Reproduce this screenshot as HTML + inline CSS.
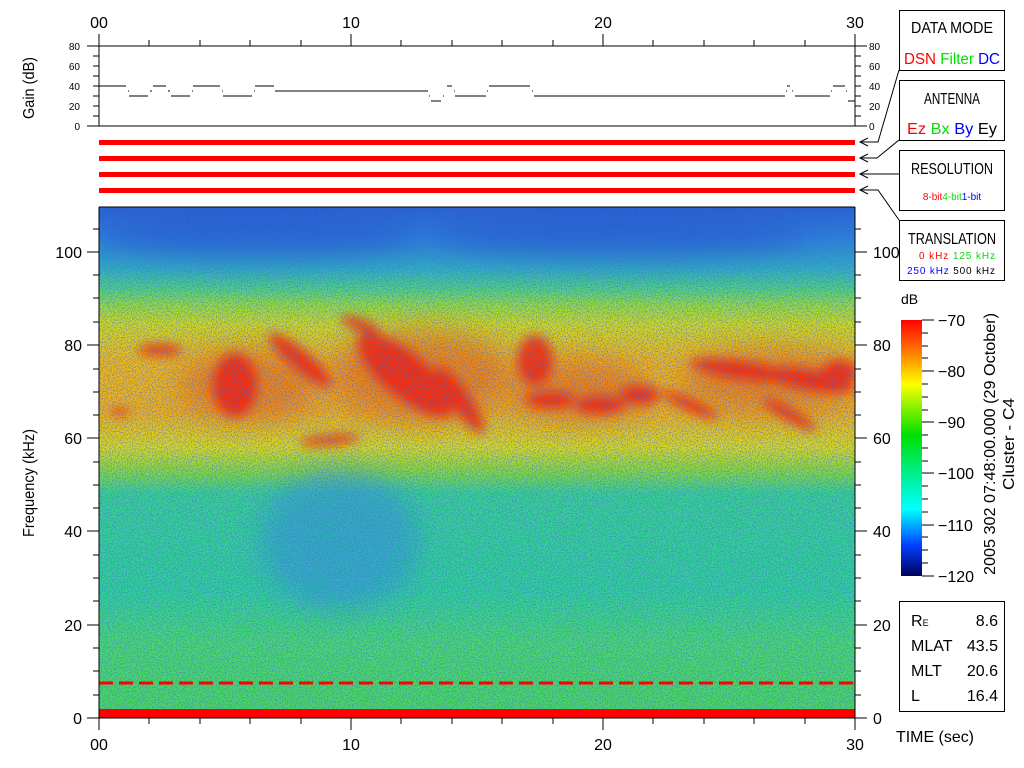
<!DOCTYPE html>
<html><head><meta charset="utf-8"><style>
html,body{margin:0;padding:0;background:#fff;}
svg{display:block;}
text{font-family:"Liberation Sans","DejaVu Sans",sans-serif;}
</style></head><body>
<svg width="1024" height="768" viewBox="0 0 1024 768" xmlns="http://www.w3.org/2000/svg">
<defs>
<linearGradient id="bg" x1="0" y1="207" x2="0" y2="718" gradientUnits="userSpaceOnUse">
<stop offset="0" stop-color="#2860d0"/>
<stop offset="0.06" stop-color="#2a80d8"/>
<stop offset="0.12" stop-color="#30b0c0"/>
<stop offset="0.16" stop-color="#50d080"/>
<stop offset="0.19" stop-color="#90dc40"/>
<stop offset="0.23" stop-color="#d0d820"/>
<stop offset="0.30" stop-color="#f0b818"/>
<stop offset="0.40" stop-color="#f0b018"/>
<stop offset="0.47" stop-color="#d8d820"/>
<stop offset="0.52" stop-color="#80d840"/>
<stop offset="0.56" stop-color="#38d090"/>
<stop offset="0.75" stop-color="#30d098"/>
<stop offset="0.85" stop-color="#48d870"/>
<stop offset="0.95" stop-color="#48d860"/>
<stop offset="1" stop-color="#48d860"/>
</linearGradient>
<linearGradient id="cb" x1="0" y1="0" x2="0" y2="1">
<stop offset="0" stop-color="#ff0000"/>
<stop offset="0.13" stop-color="#ff8000"/>
<stop offset="0.25" stop-color="#ffff00"/>
<stop offset="0.45" stop-color="#00e000"/>
<stop offset="0.62" stop-color="#00f0a0"/>
<stop offset="0.74" stop-color="#00ffff"/>
<stop offset="0.88" stop-color="#0040ff"/>
<stop offset="1" stop-color="#000060"/>
</linearGradient>
<filter id="bl" x="-50%" y="-50%" width="200%" height="200%"><feGaussianBlur stdDeviation="14"/></filter>
<filter id="bl2" x="-50%" y="-50%" width="200%" height="200%"><feGaussianBlur stdDeviation="5"/></filter>
<filter id="nz" x="0" y="0" width="100%" height="100%"><feTurbulence type="fractalNoise" baseFrequency="0.8" numOctaves="1" seed="3" result="t"/><feColorMatrix in="t" type="matrix" values="0 0 0 0 0.05  0 0 0 0 0.15  0 0 0 0 0.7  0 0 0 -6 3.2"/></filter>
<clipPath id="cp"><rect x="99" y="207" width="756" height="511"/></clipPath>
</defs>

<g clip-path="url(#cp)">
<rect x="99" y="207" width="756" height="511" fill="url(#bg)"/>
<g filter="url(#bl)" opacity="0.55">
<ellipse cx="340" cy="540" rx="80" ry="70" fill="#3090e0"/>
<ellipse cx="260" cy="235" rx="160" ry="22" fill="#2050c8"/>
<ellipse cx="620" cy="235" rx="190" ry="22" fill="#2050c8"/>
</g>
<g filter="url(#bl)" fill="#f06010" opacity="0.6">
<ellipse cx="250" cy="385" rx="70" ry="35"/>
<ellipse cx="420" cy="375" rx="90" ry="45"/>
<ellipse cx="580" cy="390" rx="70" ry="30"/>
<ellipse cx="770" cy="380" rx="90" ry="30"/>
</g>
<g filter="url(#bl2)" fill="#ff1000" opacity="0.75">
<ellipse cx="235" cy="385" rx="22" ry="32"/>
<ellipse cx="160" cy="350" rx="22" ry="6"/>
<ellipse cx="300" cy="360" rx="40" ry="10" transform="rotate(40 300 360)"/>
<ellipse cx="405" cy="375" rx="60" ry="22" transform="rotate(40 405 375)"/>
<ellipse cx="460" cy="400" rx="40" ry="10" transform="rotate(55 460 400)"/>
<ellipse cx="535" cy="360" rx="18" ry="25"/>
<ellipse cx="550" cy="400" rx="25" ry="8"/>
<ellipse cx="600" cy="405" rx="25" ry="9"/>
<ellipse cx="640" cy="395" rx="20" ry="10"/>
<ellipse cx="690" cy="405" rx="30" ry="6" transform="rotate(25 690 405)"/>
<ellipse cx="740" cy="370" rx="50" ry="9" transform="rotate(8 740 370)"/>
<ellipse cx="810" cy="380" rx="45" ry="10" transform="rotate(10 810 380)"/>
<ellipse cx="840" cy="372" rx="18" ry="12"/>
<ellipse cx="790" cy="415" rx="30" ry="6" transform="rotate(30 790 415)"/>
<ellipse cx="360" cy="325" rx="20" ry="6" transform="rotate(20 360 325)"/>
<ellipse cx="120" cy="412" rx="10" ry="3"/>
<ellipse cx="330" cy="440" rx="30" ry="5" transform="rotate(-5 330 440)"/>
</g>
<rect x="99" y="207" width="756" height="511" filter="url(#nz)" opacity="0.5"/>
<rect x="99" y="709" width="756" height="9" fill="#ff0000"/>
<line x1="99" y1="683" x2="855" y2="683" stroke="#ff0000" stroke-width="3" stroke-dasharray="14 6"/>
</g>

<g stroke="#000" stroke-width="1" fill="none">
<line x1="99" y1="207" x2="99" y2="718"/>
<line x1="855" y1="207" x2="855" y2="718"/>
<line x1="99" y1="718" x2="855" y2="718"/>
<line x1="99" y1="207" x2="855" y2="207"/>
<path d="M87 718H99M87 625H99M87 531H99M87 438H99M87 345H99M87 252H99M93 671H99M93 578H99M93 485H99M93 392H99M93 298H99M93 695H99M93 648H99M93 601H99M93 555H99M93 508H99M93 462H99M93 415H99M93 369H99M93 322H99M93 275H99M93 229H99"/>
<path d="M855 718H867M855 625H867M855 531H867M855 438H867M855 345H867M855 252H867M855 671H861M855 578H861M855 485H861M855 392H861M855 298H861M855 695H861M855 648H861M855 601H861M855 555H861M855 508H861M855 462H861M855 415H861M855 369H861M855 322H861M855 275H861M855 229H861"/>
<path d="M99 718V730M351 718V730M603 718V730M855 718V730M149 718V724M200 718V724M250 718V724M301 718V724M401 718V724M452 718V724M502 718V724M553 718V724M653 718V724M704 718V724M754 718V724M805 718V724"/>
<path d="M99 34V46M351 34V46M603 34V46M855 34V46M149 40V46M200 40V46M250 40V46M301 40V46M401 40V46M452 40V46M502 40V46M553 40V46M653 40V46M704 40V46M754 40V46M805 40V46"/>
<line x1="87" y1="46" x2="867" y2="46"/>
<line x1="87" y1="126" x2="867" y2="126"/>
<line x1="99" y1="46" x2="99" y2="126"/>
<line x1="855" y1="46" x2="855" y2="126"/>
<path d="M93 56H99M93 66H99M93 76H99M93 86H99M93 96H99M93 106H99M93 116H99M855 56H861M855 66H861M855 76H861M855 86H861M855 96H861M855 106H861M855 116H861"/>
<path d="M99 86H126M128 91H129M129 96H148M150 91H152M153 86H166M168 91H170M171 96H190M192 91H193M193 86H220M222 91H223M223 96H252M254 91H255M255 86H274M275 91H428M429 96H430M431 101H441M443 96H444M447 86H452M454 91H455M455 96H486M487 91H488M489 86H530M532 91H533M534 96H785M786 91H787M787 86H790M792 91H793M795 96H830M831 91H832M833 86H845M846 91H847M848 101H855"/>
<path d="M922 320H934M922 371H934M922 422H934M922 473H934M922 525H934M922 576H934M922 333H928M922 346H928M922 358H928M922 384H928M922 397H928M922 410H928M922 435H928M922 448H928M922 461H928M922 486H928M922 499H928M922 512H928M922 537H928M922 550H928M922 563H928"/>
<rect x="899.5" y="10.5" width="105" height="60"/>
<rect x="899.5" y="80.5" width="105" height="60"/>
<rect x="899.5" y="150.5" width="105" height="60"/>
<rect x="899.5" y="220.5" width="105" height="60"/>
<rect x="899.5" y="601.5" width="105" height="110"/>
<path d="M899 70L878 142H860M899 140L877 158H860M899 174H860M899 220L878 190H860"/>
<path d="M868 138L860 142L868 146M868 154L860 158L868 162M868 170L860 174L868 178M868 186L860 190L868 194"/>
</g>

<rect x="99" y="140" width="756" height="5" fill="#ff0000"/>
<rect x="99" y="156" width="756" height="5" fill="#ff0000"/>
<rect x="99" y="172" width="756" height="5" fill="#ff0000"/>
<rect x="99" y="188" width="756" height="5" fill="#ff0000"/>

<rect x="901" y="320" width="21" height="256" fill="url(#cb)"/>

<g font-size="16" fill="#000">
<text x="99" y="28" text-anchor="middle">00</text>
<text x="351" y="28" text-anchor="middle">10</text>
<text x="603" y="28" text-anchor="middle">20</text>
<text x="855" y="28" text-anchor="middle">30</text>
<text x="99" y="750" text-anchor="middle">00</text>
<text x="351" y="750" text-anchor="middle">10</text>
<text x="603" y="750" text-anchor="middle">20</text>
<text x="855" y="750" text-anchor="middle">30</text>
<g text-anchor="end">
<text x="82" y="724">0</text><text x="82" y="631">20</text><text x="82" y="537">40</text><text x="82" y="444">60</text><text x="82" y="351">80</text><text x="82" y="258">100</text>
</g>
<text x="873" y="724">0</text><text x="873" y="631">20</text><text x="873" y="537">40</text><text x="873" y="444">60</text><text x="873" y="351">80</text><text x="873" y="258">100</text>
<text x="938" y="326">−70</text><text x="938" y="377">−80</text><text x="938" y="428">−90</text><text x="938" y="479">−100</text><text x="938" y="531">−110</text><text x="938" y="582">−120</text>
<text x="901" y="304" font-size="14">dB</text>
<text x="896" y="742" textLength="78" lengthAdjust="spacingAndGlyphs">TIME (sec)</text>
<text transform="translate(34 483) rotate(-90)" text-anchor="middle" textLength="108" lengthAdjust="spacingAndGlyphs">Frequency (kHz)</text>
<text transform="translate(34 88) rotate(-90)" text-anchor="middle" textLength="62" lengthAdjust="spacingAndGlyphs">Gain (dB)</text>
<text transform="translate(995 444) rotate(-90)" text-anchor="middle" textLength="262" lengthAdjust="spacingAndGlyphs">2005 302 07:48:00.000 (29 October)</text>
<text transform="translate(1014 444) rotate(-90)" text-anchor="middle" textLength="92" lengthAdjust="spacingAndGlyphs">Cluster - C4</text>
<text x="952" y="33" text-anchor="middle" textLength="82" lengthAdjust="spacingAndGlyphs">DATA MODE</text>
<text x="952" y="64" text-anchor="middle" textLength="96" lengthAdjust="spacingAndGlyphs"><tspan fill="#ff0000">DSN</tspan> <tspan fill="#00e000">Filter</tspan> <tspan fill="#0000ff">DC</tspan></text>
<text x="952" y="104" text-anchor="middle" textLength="56" lengthAdjust="spacingAndGlyphs">ANTENNA</text>
<text x="952" y="134" text-anchor="middle" textLength="90" lengthAdjust="spacingAndGlyphs"><tspan fill="#ff0000">Ez</tspan> <tspan fill="#00e000">Bx</tspan> <tspan fill="#0000ff">By</tspan> Ey</text>
<text x="952" y="174" text-anchor="middle" textLength="82" lengthAdjust="spacingAndGlyphs">RESOLUTION</text>
<text x="952" y="244" text-anchor="middle" textLength="88" lengthAdjust="spacingAndGlyphs">TRANSLATION</text>
<text x="911" y="626">R<tspan font-size="9">E</tspan></text><text x="998" y="626" text-anchor="end">8.6</text>
<text x="911" y="651">MLAT</text><text x="998" y="651" text-anchor="end">43.5</text>
<text x="911" y="676">MLT</text><text x="998" y="676" text-anchor="end">20.6</text>
<text x="911" y="701">L</text><text x="998" y="701" text-anchor="end">16.4</text>
</g>
<g font-size="10" font-family="Liberation Mono,monospace">
<text x="952" y="200" text-anchor="middle"><tspan fill="#ff0000">8-bit</tspan><tspan fill="#00e000">4-bit</tspan><tspan fill="#0000ff">1-bit</tspan></text>
<text x="919" y="259" textLength="76"><tspan fill="#ff0000">0 kHz</tspan> <tspan fill="#00e000">125 kHz</tspan></text>
<text x="907" y="274" textLength="88"><tspan fill="#0000ff">250 kHz</tspan> <tspan fill="#000">500 kHz</tspan></text>
<g text-anchor="end" fill="#000">
<text x="80" y="50">80</text><text x="80" y="70">60</text><text x="80" y="90">40</text><text x="80" y="110">20</text><text x="80" y="130">0</text>
</g>
<g fill="#000">
<text x="869" y="50">80</text><text x="869" y="70">60</text><text x="869" y="90">40</text><text x="869" y="110">20</text><text x="869" y="130">0</text>
</g>
</g>
</svg>
</body></html>
